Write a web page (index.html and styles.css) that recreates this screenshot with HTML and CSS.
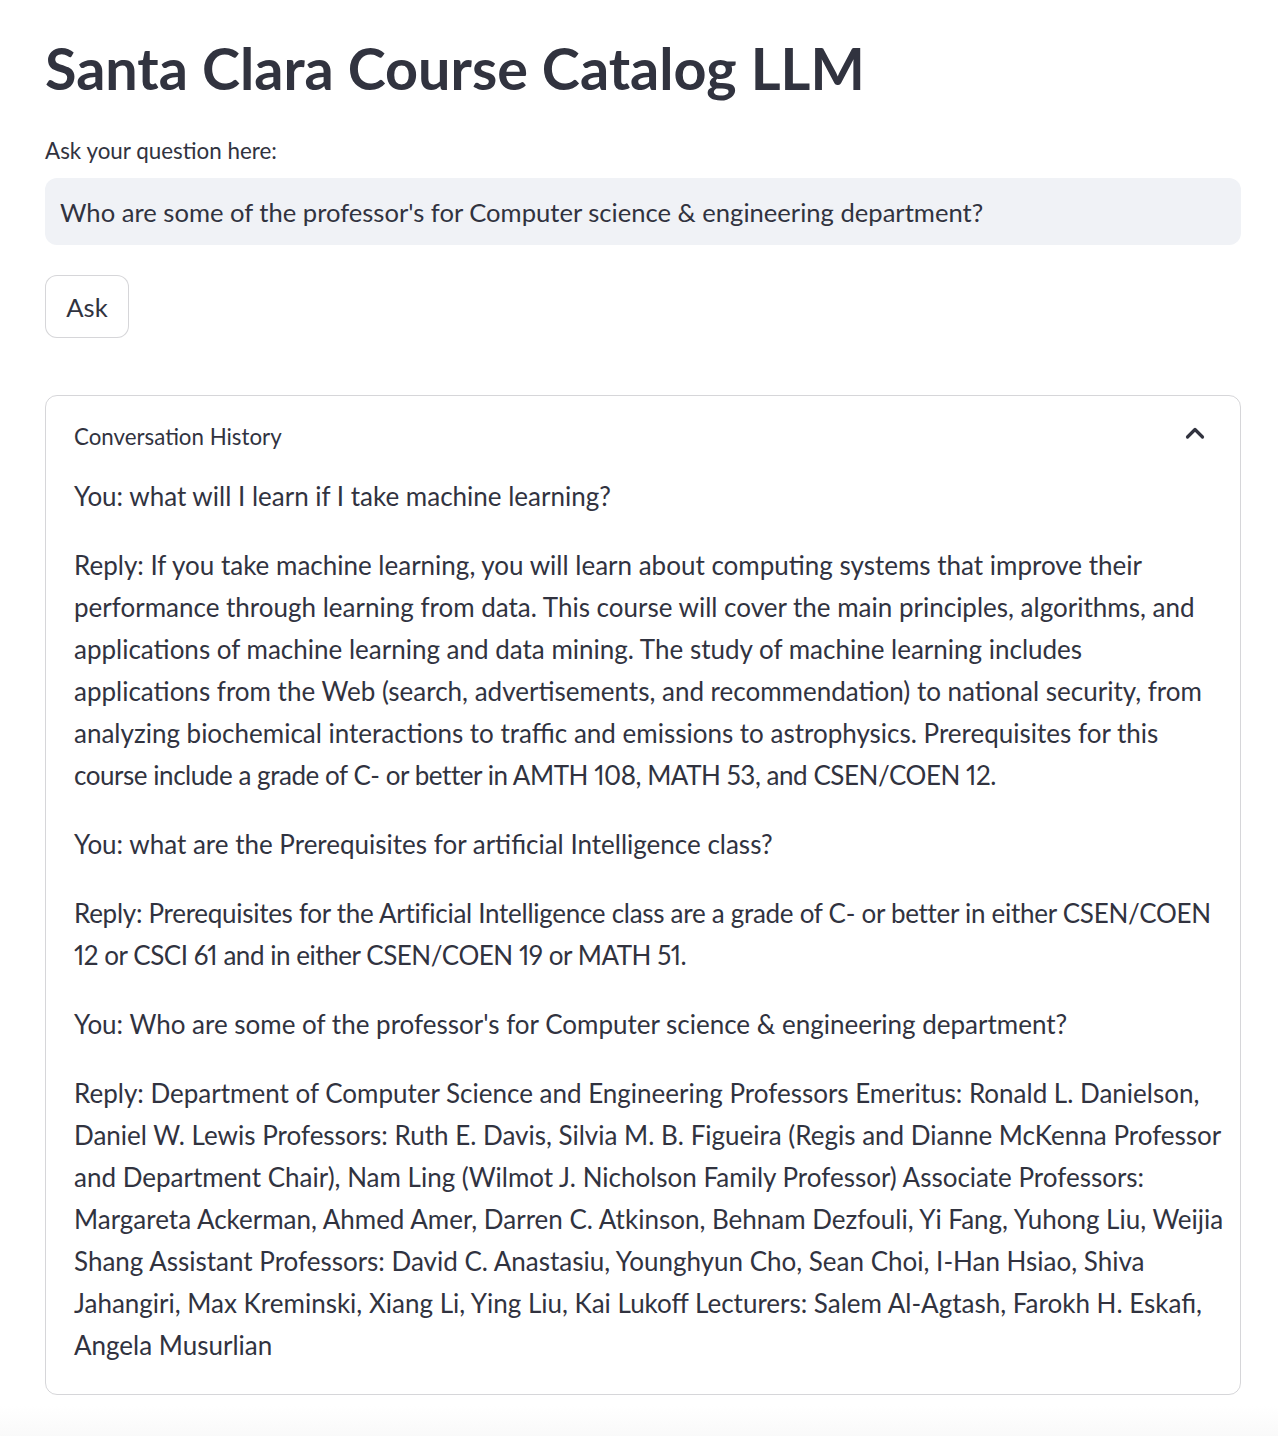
FILE: index.html
```html
<!DOCTYPE html>
<html lang="en">
<head>
<meta charset="utf-8">
<title>Santa Clara Course Catalog LLM</title>
<link rel="stylesheet" href="styles.css">
</head>
<body>
<main class="main">
  <h1 class="title">Santa Clara Course Catalog LLM</h1>
  <label class="label" for="q">Ask your question here:</label>
  <div class="input-box" id="q">Who are some of the professor's for Computer science &amp; engineering department?</div>
  <button class="btn" type="button">Ask</button>
  <section class="expander">
    <div class="exp-head">
      <span class="exp-title">Conversation History</span>
      <svg class="chev" width="20" height="14" viewBox="0 0 20 14"><path d="M2.5 11 L10 3.5 L17.5 11" fill="none" stroke="#31333f" stroke-width="3.2" stroke-linecap="round" stroke-linejoin="round"/></svg>
    </div>
    <div class="exp-body">
      <p>You: what will I learn if I take machine learning?</p>
      <p>Reply: If you take machine learning, you will learn about computing systems that improve their<br>performance through learning from data. This course will cover the main principles, algorithms, and<br>applications of machine learning and data mining. The study of machine learning includes<br>applications from the Web (search, advertisements, and recommendation) to national security, from<br>analyzing biochemical interactions to traffic and emissions to astrophysics. Prerequisites for this<br><span class="tight-s">course include a grade of C- or better in AMTH 108, MATH 53, and CSEN/COEN 12.</span></p>
      <p>You: what are the Prerequisites for artificial Intelligence class?</p>
      <p><span class="tight">Reply: Prerequisites for the Artificial Intelligence class are a grade of C- or better in either CSEN/COEN</span><br><span class="tight-s">12 or CSCI 61 and in either CSEN/COEN 19 or MATH 51.</span></p>
      <p>You: Who are some of the professor's for Computer science &amp; engineering department?</p>
      <p class="last">Reply: Department of Computer Science and Engineering Professors Emeritus: Ronald L. Danielson,<br>Daniel W. Lewis Professors: Ruth E. Davis, Silvia M. B. Figueira (Regis and Dianne McKenna Professor<br>and Department Chair), Nam Ling (Wilmot J. Nicholson Family Professor) Associate Professors:<br>Margareta Ackerman, Ahmed Amer, Darren C. Atkinson, Behnam Dezfouli, Yi Fang, Yuhong Liu, Weijia<br>Shang Assistant Professors: David C. Anastasiu, Younghyun Cho, Sean Choi, I-Han Hsiao, Shiva<br>Jahangiri, Max Kreminski, Xiang Li, Ying Liu, Kai Lukoff Lecturers: Salem Al-Agtash, Farokh H. Eskafi,<br>Angela Musurlian</p>
    </div>
  </section>
</main>
<div class="fade"></div>
</body>
</html>
```

FILE: styles.css
```css
html, body {
  margin: 0;
  padding: 0;
  background: #ffffff;
}
body {
  font-family: Lato, "Noto Sans", sans-serif;
  font-variant-numeric: proportional-nums;
  color: #31333f;
  min-height: 1436px;
  position: relative;
  overflow: hidden;
}
.main {
  padding: 28px 37px 0 45px;
}
.title {
  margin: 0;
  font-size: 57.5px;
  font-weight: 700;
  line-height: 80px;
}
.label {
  display: block;
  margin-top: 27px;
  font-size: 22.4px;
  line-height: 32px;
}
.input-box {
  margin-top: 11px;
  height: 67px;
  box-sizing: border-box;
  background: #f0f2f6;
  border-radius: 12px;
  padding: 0 15px;
  display: flex;
  align-items: center;
  font-size: 25.6px;
  white-space: nowrap;
}
.btn {
  display: block;
  margin-top: 30px;
  width: 84px;
  height: 63px;
  background: #fff;
  border: 1.5px solid rgba(49, 51, 63, 0.2);
  border-radius: 12px;
  font-family: inherit;
  font-size: 25.6px;
  color: #31333f;
  padding: 0;
}
.expander {
  margin-top: 57px;
  border: 1.5px solid rgba(49, 51, 63, 0.2);
  border-radius: 12px;
  height: 1000px;
  box-sizing: border-box;
}
.exp-head {
  height: 79px;
  display: flex;
  align-items: center;
  justify-content: space-between;
  padding: 0 35px 0 28px;
  box-sizing: border-box;
}
.exp-title {
  font-size: 22.3px;
  margin-top: 2px;
}
.chev {
  margin-top: -6px;
}
.exp-body {
  padding: 0 28px;
}
.exp-body p {
  margin: 0 0 27px;
  font-size: 26px;
  line-height: 42px;
  white-space: nowrap;
}
.exp-body p.last {
  margin-bottom: 0;
}
.tight {
  letter-spacing: -0.28px;
}
.tight-s {
  letter-spacing: -0.45px;
}
.fade {
  position: absolute;
  left: 0;
  right: 0;
  bottom: 0;
  height: 30px;
  background: linear-gradient(to bottom, rgba(250,250,250,0), rgba(248,248,248,0.8));
}
```
